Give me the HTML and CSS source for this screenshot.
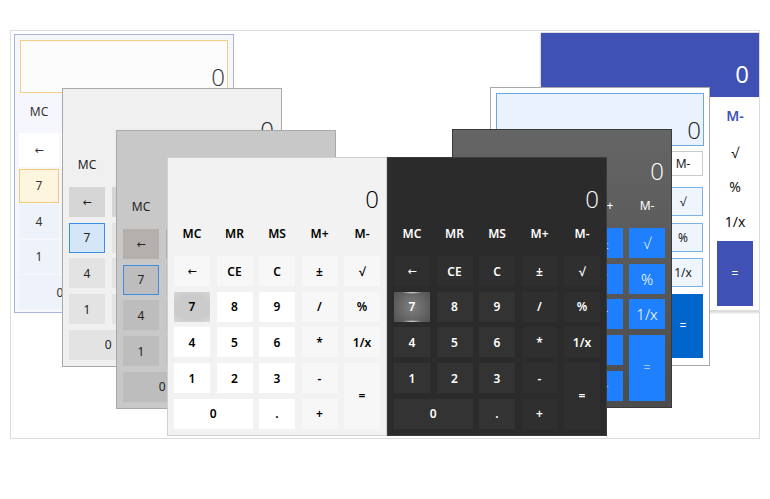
FILE: index.html
```html
<!DOCTYPE html>
<html lang="en">
<head>
  <meta charset="UTF-8" />
  <meta name="viewport" content="width=device-width, initial-scale=1.0"/>
  <title>Calculator Themes</title>
  <link rel="stylesheet" href="styles.css">
</head>
<body>
  <div class="desk">
    <section class="calc boxed theme-office w1"></section>
    <section class="calc theme-silver w2"></section>
    <section class="calc theme-steel w3"></section>
    <section class="calc theme-light w4"></section>
    <section class="calc theme-indigo w8"></section>
    <section class="calc boxed theme-azure w7"></section>
    <section class="calc theme-graphite w6"></section>
    <section class="calc theme-dark w5"></section>
  </div>

  <script>
    const memoryKeys = ["MC", "MR", "MS", "M+", "M-"];
    const keys = [
      ["←", "op back"], ["CE", "op"], ["C", "op"], ["±", "op"], ["√", "op"],
      ["7", "num hot"], ["8", "num"], ["9", "num"], ["/", "op"], ["%", "op"],
      ["4", "num"], ["5", "num"], ["6", "num"], ["*", "op"], ["1/x", "op"],
      ["1", "num"], ["2", "num"], ["3", "num"], ["-", "op"], ["=", "op eq"],
      ["0", "num zero"], [".", "num"], ["+", "op"]
    ];

    document.querySelectorAll(".calc").forEach((calc) => {
      const readout = document.createElement("div");
      readout.className = "readout";
      readout.innerHTML = "<span>0</span>";
      calc.appendChild(readout);

      const memory = document.createElement("div");
      memory.className = "memory";
      memoryKeys.forEach((label) => {
        const item = document.createElement("span");
        item.textContent = label;
        memory.appendChild(item);
      });
      calc.appendChild(memory);

      const pad = document.createElement("div");
      pad.className = "keys";
      keys.forEach(([label, kind]) => {
        const button = document.createElement("button");
        button.className = "key " + kind;
        button.textContent = label;
        pad.appendChild(button);
      });
      calc.appendChild(pad);
    });
  </script>
</body>
</html>
```

FILE: styles.css
```css
body {
  margin: 0;
  background: #fff;
  font-family: "Noto Sans", "Open Sans", sans-serif;
}
.desk {
  position: relative;
  width: 748px;
  height: 407px;
  margin: 30px 0 0 10px;
  border: 1px solid #dcdcdc;
  overflow: hidden;
}

/* shared window frame */
.calc {
  position: absolute;
  width: 220px;
  height: 279px;
  box-sizing: border-box;
  border: 1px solid #aaa;
  padding: 0 6px;
  overflow: hidden;
  font-size: 12px;
  color: #222;
}
.calc * {
  box-sizing: border-box;
}
.readout {
  height: 56px;
  display: flex;
  align-items: flex-end;
  justify-content: flex-end;
  padding-right: 1px;
  font: 300 24px/30px "Open Sans", sans-serif;
}
.memory {
  display: grid;
  grid-template-columns: repeat(5, 36px);
  column-gap: 6.5px;
  height: 38px;
  align-items: center;
  text-align: center;
}
.keys {
  margin-top: 4px;
  display: grid;
  grid-template-columns: repeat(5, 36px);
  column-gap: 6.5px;
  row-gap: 5.7px;
  grid-auto-rows: 30px;
}
.key {
  margin: 0;
  padding: 0;
  border: 0;
  font: inherit;
  color: inherit;
  background: #fff;
}
.key.back {
  font-family: "DejaVu Sans", sans-serif;
  font-weight: 400;
  font-size: 11px;
}
.key.eq {
  grid-row: span 2;
}
.key.zero {
  grid-column: span 2;
}

/* boxed layout: framed display, tighter columns */
.calc.boxed {
  padding: 4px 4px 0;
}
.boxed .readout {
  margin: 1px 1px 0;
  height: 53px;
  border: 1px solid;
  padding: 0 2px 0 0;
}
.boxed .memory {
  margin-top: 5px;
  height: 25px;
  grid-template-columns: repeat(5, 40px);
  column-gap: 2px;
}
.boxed .memory span {
  height: 25px;
  line-height: 25px;
  padding-top: 1px;
}
.boxed .keys {
  margin-top: 10px;
  grid-template-columns: repeat(5, 40px);
  column-gap: 2px;
  row-gap: 1.5px;
  grid-auto-rows: 34px;
}

/* window positions */
.w1 { left: 3px; top: 3px; }
.w2 { left: 51px; top: 57px; }
.w3 { left: 105px; top: 99px; }
.w4 { left: 156px; top: 126px; }
.w5 { left: 376px; top: 126px; }
.w6 { left: 441px; top: 98px; }
.w7 { left: 479px; top: 56px; }
.w8 { left: 529px; top: 1px; }

/* office */
.theme-office {
  background: #f5f7fd;
  border-color: #a7b6da;
  color: #333;
}
.theme-office .readout {
  background: #fcfcfc;
  border-color: #f6cd85;
}
.theme-office .op {
  background: #fff;
}
.theme-office .num {
  background: #eef2fb;
}
.theme-office .hot {
  background: #fef5de;
  border: 1px solid #f5c77a;
}

/* silver */
.theme-silver {
  background: #f0f0f0;
  border-color: #a9a9a9;
}
.theme-silver .op {
  background: #d5d5d5;
}
.theme-silver .num {
  background: #e3e3e3;
}
.theme-silver .hot,
.theme-steel .hot {
  background: #d4e6f7;
  border: 1px solid #3a8ee6;
}

/* steel */
.theme-steel {
  background: #c8c8c8;
  border-color: #a9a9a9;
}
.theme-steel .op {
  background: #b5b0ad;
}
.theme-steel .num {
  background: #bdbdbd;
}

/* light */
.theme-light {
  background: #f2f2f2;
  border-color: #cfcfcf;
  color: #000;
}
.theme-light .memory,
.theme-light .keys,
.theme-dark .memory,
.theme-dark .keys {
  font-weight: 600;
}
.theme-light .op {
  background: #f7f7f7;
}
.theme-light .hot {
  background: radial-gradient(ellipse 80% 70% at 50% 50%, #cbcbcb 60%, #d9d9d9 100%);
}

/* dark */
.theme-dark {
  background: #2b2b2b;
  border-color: #3c3c3c;
  color: #fff;
}
.theme-dark .op {
  background: #2f2f2f;
}
.theme-dark .num {
  background: #333;
}
.theme-dark .hot {
  background:
    radial-gradient(ellipse 30% 2px at 50% 0, rgba(255, 255, 255, 0.8), transparent),
    radial-gradient(ellipse 30% 2px at 50% 100%, rgba(255, 255, 255, 0.8), transparent),
    radial-gradient(ellipse 75% 90% at 50% 50%, #808080, #4a4a4a);
}

/* graphite */
.theme-graphite {
  background: linear-gradient(#656565, #4c4c4c);
  border-color: #3a3a3a;
  color: #fff;
}
.theme-graphite .key {
  background: #1e80ff;
  font-size: 15px;
  font-weight: 300;
}
.theme-graphite .key.eq {
  font-size: 12px;
}

/* azure */
.theme-azure {
  background: #fff;
  border-color: #a9a9a9;
  color: #222;
}
.theme-azure .readout {
  background: #eaf3fd;
  border-color: #6fa6de;
}
.theme-azure .memory span {
  border: 1px solid #cacaca;
  line-height: 22px;
}
.theme-azure .keys {
  margin-top: 11px;
  grid-auto-rows: 29px;
  row-gap: 6.5px;
}
.theme-azure .key {
  border: 1px solid #cacaca;
}
.theme-azure .op {
  background: #eef5fd;
  border-color: #7cb1e6;
}
.theme-azure .key.eq {
  background: #0066cc;
  border: 0;
  color: #fff;
}

/* indigo */
.theme-indigo {
  background: #fff;
  border-color: #dedede;
  box-shadow: 0 2px 2px rgba(0, 0, 0, 0.15);
}
.theme-indigo .readout {
  margin: 0 -6px;
  height: 64px;
  padding: 0 10px 8px 0;
  background: #3f51b5;
  color: #fff;
  font-weight: 400;
}
.theme-indigo .memory {
  height: 36px;
  color: #3f51b5;
  font-size: 14px;
  font-weight: 600;
}
.theme-indigo .keys {
  row-gap: 4.7px;
  font-size: 14px;
  color: #111;
}
.theme-indigo .key.eq {
  background: #3f51b5;
  color: #fff;
  font-size: 12px;
}
```
